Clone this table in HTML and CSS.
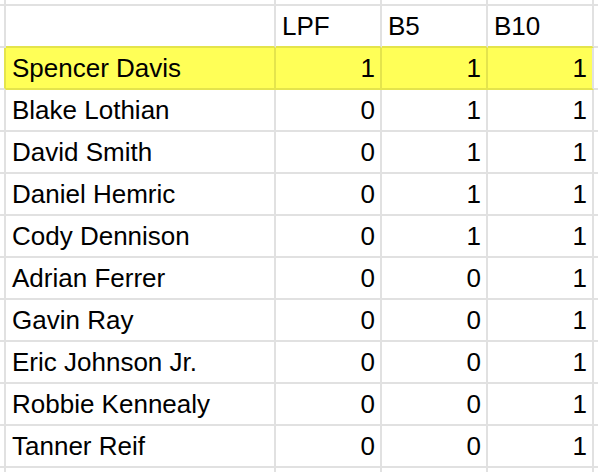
FILE: index.html
```
<!DOCTYPE html>
<html>
<head>
<meta charset="utf-8">
<link rel="stylesheet" href="styles.css">
</head>
<body>
<div class="frame">
<div class="sheet">
  <div class="row">
    <div class="cell c0"></div><div class="cell c1"></div><div class="cell cn"></div><div class="cell cn"></div><div class="cell cn"></div><div class="cell c6"></div>
  </div>
  <div class="row head">
    <div class="cell c0"></div><div class="cell c1"></div><div class="cell cn txt">LPF</div><div class="cell cn txt">B5</div><div class="cell cn txt">B10</div><div class="cell c6"></div>
  </div>
  <div class="row hl">
    <div class="cell c0"></div><div class="cell c1 txt">Spencer Davis</div><div class="cell cn num">1</div><div class="cell cn num">1</div><div class="cell cn num last">1</div><div class="cell c6"></div>
  </div>
  <div class="row">
    <div class="cell c0"></div><div class="cell c1 txt">Blake Lothian</div><div class="cell cn num">0</div><div class="cell cn num">1</div><div class="cell cn num">1</div><div class="cell c6"></div>
  </div>
  <div class="row">
    <div class="cell c0"></div><div class="cell c1 txt">David Smith</div><div class="cell cn num">0</div><div class="cell cn num">1</div><div class="cell cn num">1</div><div class="cell c6"></div>
  </div>
  <div class="row">
    <div class="cell c0"></div><div class="cell c1 txt">Daniel Hemric</div><div class="cell cn num">0</div><div class="cell cn num">1</div><div class="cell cn num">1</div><div class="cell c6"></div>
  </div>
  <div class="row">
    <div class="cell c0"></div><div class="cell c1 txt">Cody Dennison</div><div class="cell cn num">0</div><div class="cell cn num">1</div><div class="cell cn num">1</div><div class="cell c6"></div>
  </div>
  <div class="row">
    <div class="cell c0"></div><div class="cell c1 txt">Adrian Ferrer</div><div class="cell cn num">0</div><div class="cell cn num">0</div><div class="cell cn num">1</div><div class="cell c6"></div>
  </div>
  <div class="row">
    <div class="cell c0"></div><div class="cell c1 txt">Gavin Ray</div><div class="cell cn num">0</div><div class="cell cn num">0</div><div class="cell cn num">1</div><div class="cell c6"></div>
  </div>
  <div class="row">
    <div class="cell c0"></div><div class="cell c1 txt">Eric Johnson Jr.</div><div class="cell cn num">0</div><div class="cell cn num">0</div><div class="cell cn num">1</div><div class="cell c6"></div>
  </div>
  <div class="row">
    <div class="cell c0"></div><div class="cell c1 txt">Robbie Kennealy</div><div class="cell cn num">0</div><div class="cell cn num">0</div><div class="cell cn num">1</div><div class="cell c6"></div>
  </div>
  <div class="row">
    <div class="cell c0"></div><div class="cell c1 txt">Tanner Reif</div><div class="cell cn num">0</div><div class="cell cn num">0</div><div class="cell cn num">1</div><div class="cell c6"></div>
  </div>
  <div class="row tail">
    <div class="cell c0"></div><div class="cell c1"></div><div class="cell cn"></div><div class="cell cn"></div><div class="cell cn"></div><div class="cell c6"></div>
  </div>
</div>
</div>
</body>
</html>
```
FILE: styles.css
```
html, body {
  margin: 0;
  padding: 0;
  background: #ffffff;
  overflow: hidden;
}

.frame {
  width: 598px;
  height: 472px;
  overflow: hidden;
}

.sheet {
  margin: -36px 0 0 -36px;
  width: 634px;
  font-family: "Liberation Sans", Arial, sans-serif;
  font-size: 26px;
  color: #000000;
}

.row {
  display: flex;
  height: 42px;
}

.row.tail {
  height: 4px;
}

.cell {
  box-sizing: border-box;
  height: 42px;
  flex: none;
  border-right: 2px solid #e1e1e1;
  border-bottom: 2px solid #e1e1e1;
  padding-top: 1px;
  line-height: 39px;
  white-space: nowrap;
  overflow: hidden;
}

.tail .cell {
  height: 4px;
  border-bottom: none;
  padding-top: 0;
}

.c0 { width: 42px; }
.c1 { width: 270px; }
.cn { width: 106px; }
.c6 {
  flex: 1 1 auto;
  min-width: 0;
  border-right: none;
}

.txt {
  padding-left: 6px;
}

.num {
  text-align: right;
  padding-right: 5px;
}

.head .c1,
.head .cn {
  border-bottom-color: #e4e44c;
}

.hl .c1,
.hl .cn {
  background: #ffff57;
  border-bottom-color: #e4e44c;
  border-right-color: #e4e44c;
}

.hl .c0 {
  border-right-color: #e4e44c;
}

.hl .cn.last {
  border-right-color: #e1e1e1;
}
```
